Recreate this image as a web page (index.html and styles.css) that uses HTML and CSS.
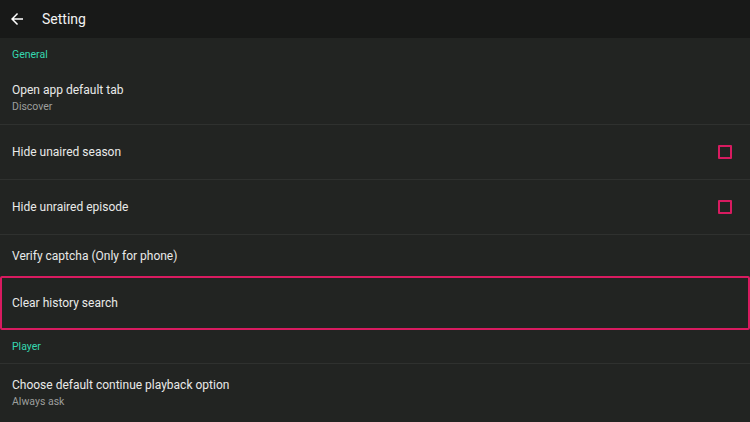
FILE: index.html
```html
<!DOCTYPE html>
<html lang="en">
<head>
    <meta charset="UTF-8">
    <meta name="viewport" content="width=device-width, initial-scale=1.0">
    <title>Setting</title>
    <link rel="stylesheet" href="styles.css">
</head>
<body>
    <div class="toolbar">
        <svg class="back" width="18" height="18" viewBox="0 0 24 24">
            <path d="M20 11H7.83l5.59-5.59L12 4l-8 8 8 8 1.41-1.41L7.83 13H20v-2z" fill="#fff"/>
        </svg>
        <span class="title">Setting</span>
    </div>

    <div class="list">
        <div class="section">General</div>

        <div class="item double">
            <div class="text">
                <div class="name">Open app default tab</div>
                <div class="sub">Discover</div>
            </div>
        </div>
        <div class="item tall">
            <div class="name">Hide unaired season</div>
            <span class="check"></span>
        </div>
        <div class="item tall">
            <div class="name">Hide unraired episode</div>
            <span class="check"></span>
        </div>
        <div class="item short">
            <div class="name">Verify captcha (Only for phone)</div>
        </div>
        <div class="item tall focused">
            <div class="name">Clear history search</div>
        </div>

        <div class="section player">Player</div>

        <div class="item double last">
            <div class="text">
                <div class="name">Choose default continue playback option</div>
                <div class="sub">Always ask</div>
            </div>
        </div>
    </div>
</body>
</html>
```

FILE: styles.css
```css
html, body {
    margin: 0;
    height: 100%;
}
body {
    font-family: Roboto, "Noto Sans", sans-serif;
    background-color: #222422;
    color: #e9eae9;
    overflow: hidden;
}
.toolbar {
    height: 38px;
    background-color: #181918;
    display: flex;
    align-items: center;
    padding-left: 8px;
}
.toolbar .back {
    margin-right: 16px;
}
.toolbar .title {
    font-size: 14px;
    color: #f2f2f2;
}
.section {
    height: 33px;
    display: flex;
    align-items: center;
    padding-left: 12px;
    font-size: 10.5px;
    color: #35d8b0;
}
.section.player {
    height: 33px;
    border-bottom: 1px solid #2f312f;
}
.item {
    display: flex;
    align-items: center;
    justify-content: space-between;
    padding: 0 18px 0 12px;
    border-bottom: 1px solid #2f312f;
    box-sizing: border-box;
}
.item.double {
    height: 54px;
}
.item.tall {
    height: 55px;
}
.item.short {
    height: 41px;
    border-bottom: none;
}
.item.focused {
    height: 54px;
    border: 2px solid #d81b60;
    border-radius: 2px;
    padding-left: 10px;
}
.item.last {
    border-bottom: none;
    height: 58px;
}
.name {
    font-size: 12px;
}
.sub {
    font-size: 10.5px;
    color: #9d9f9d;
    margin-top: 3px;
}
.check {
    width: 10px;
    height: 10px;
    border: 2px solid #d81b60;
    border-radius: 1px;
}
```
